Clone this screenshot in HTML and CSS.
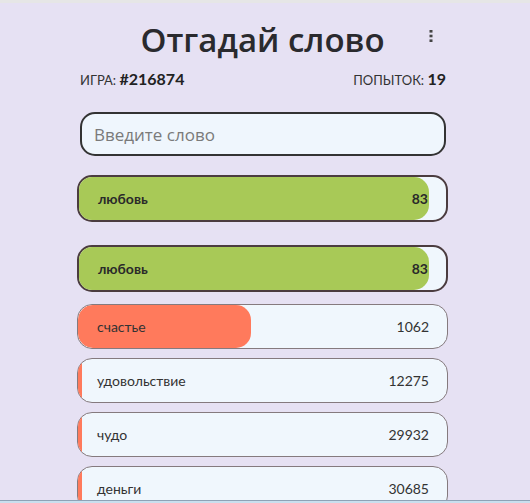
FILE: index.html
```html
<!DOCTYPE html>
<html>
<head>
    <title>Отгадай слово</title>
    <link rel="stylesheet" href="styles.css">
</head>
<body>
    <div class="page">
        <div class="container">
            <header class="header">
                <h1>Отгадай слово</h1>
                <button class="menu-button" aria-label="Меню">
                    <svg width="4" height="12" viewBox="0 0 4 12">
                        <rect x="0.5" y="0" width="3" height="2.6" fill="#444"/>
                        <rect x="0.5" y="4.7" width="3" height="2.6" fill="#444"/>
                        <rect x="0.5" y="9.4" width="3" height="2.6" fill="#444"/>
                    </svg>
                </button>
            </header>
            <div class="info">
                <span>ИГРА: <strong>#216874</strong></span>
                <span>ПОПЫТОК: <strong>19</strong></span>
            </div>
            <input class="word-input" type="text" placeholder="Введите слово">

            <div class="guess guess-current">
                <div class="guess-fill fill-green" style="width: 95.5%"></div>
                <span class="guess-word">любовь</span>
                <span class="guess-rank">83</span>
            </div>

            <div class="guess-list">
                <div class="guess guess-current">
                    <div class="guess-fill fill-green" style="width: 95.5%"></div>
                    <span class="guess-word">любовь</span>
                    <span class="guess-rank">83</span>
                </div>
                <div class="guess">
                    <div class="guess-fill fill-red" style="width: 47%"></div>
                    <span class="guess-word">счастье</span>
                    <span class="guess-rank">1062</span>
                </div>
                <div class="guess">
                    <div class="guess-fill fill-red" style="width: 1%"></div>
                    <span class="guess-word">удовольствие</span>
                    <span class="guess-rank">12275</span>
                </div>
                <div class="guess">
                    <div class="guess-fill fill-red" style="width: 1%"></div>
                    <span class="guess-word">чудо</span>
                    <span class="guess-rank">29932</span>
                </div>
                <div class="guess">
                    <div class="guess-fill fill-red" style="width: 1%"></div>
                    <span class="guess-word">деньги</span>
                    <span class="guess-rank">30685</span>
                </div>
            </div>
        </div>
    </div>
    <div class="bottom-bar"></div>
</body>
</html>
```

FILE: styles.css
```css
body {
    margin: 0;
    font-family: Lato, "Open Sans", sans-serif;
    background-color: #e6e1f3;
    border-top: 3px solid #e6e6e6;
    color: #2b2b2b;
}

.page {
    display: flex;
    justify-content: center;
    padding-right: 5px;
}

.container {
    width: 371px;
    display: flex;
    flex-direction: column;
}

.header {
    position: relative;
    display: flex;
    justify-content: center;
    padding-top: 11px;
}

h1 {
    margin: 0;
    font-family: "Open Sans", sans-serif;
    font-weight: 600;
    font-size: 33px;
    line-height: 52px;
    color: #2a2a2e;
}

.menu-button {
    position: absolute;
    right: 15px;
    top: 27px;
    border: none;
    background: none;
    padding: 0;
    line-height: 0;
    cursor: pointer;
}

.info {
    display: flex;
    justify-content: space-between;
    padding: 3px 2px 0 3px;
    font-size: 13px;
    line-height: 20px;
    color: #333;
}

.info strong {
    font-size: 16px;
    font-weight: 700;
    color: #222;
}

.word-input {
    margin: 22px 2px 0 3px;
    height: 44px;
    box-sizing: border-box;
    padding: 0 12px;
    border: 2px solid #333;
    border-radius: 15px;
    background-color: #eff6fd;
    font-family: "Open Sans", sans-serif;
    font-size: 17px;
    color: #333;
    outline: none;
}

.word-input::placeholder {
    color: #7a7a7a;
}

.guess {
    position: relative;
    display: flex;
    justify-content: space-between;
    align-items: center;
    height: 45px;
    box-sizing: border-box;
    padding: 0 18px 0 19px;
    border: 1px solid #857a7e;
    border-radius: 15px;
    background-color: #f0f7fd;
    overflow: hidden;
    font-size: 14px;
    color: #333;
}

.guess-current {
    height: 47px;
    margin-top: 19px;
    border: 2px solid #4b3c3f;
    padding: 0 18px 0 19px;
    font-weight: 700;
    color: #2a2a2a;
}

.guess-list {
    display: flex;
    flex-direction: column;
    gap: 9px;
    margin-top: 3px;
}

.guess-list .guess-current {
    margin-top: 20px;
    margin-bottom: 3px;
}

.guess-fill {
    position: absolute;
    left: 0;
    top: 0;
    bottom: 0;
    min-width: 3px;
    border-radius: 0 15px 15px 0;
}

.fill-green {
    background-color: #a8c957;
}

.fill-red {
    background-color: #ff7a5c;
    border-radius: 15px;
}

.guess-word,
.guess-rank {
    position: relative;
}

.bottom-bar {
    position: fixed;
    left: 0;
    right: 0;
    bottom: 0;
    height: 2px;
    border-top: 1px solid #8ea2b6;
    background-color: #c9dfee;
}
```
